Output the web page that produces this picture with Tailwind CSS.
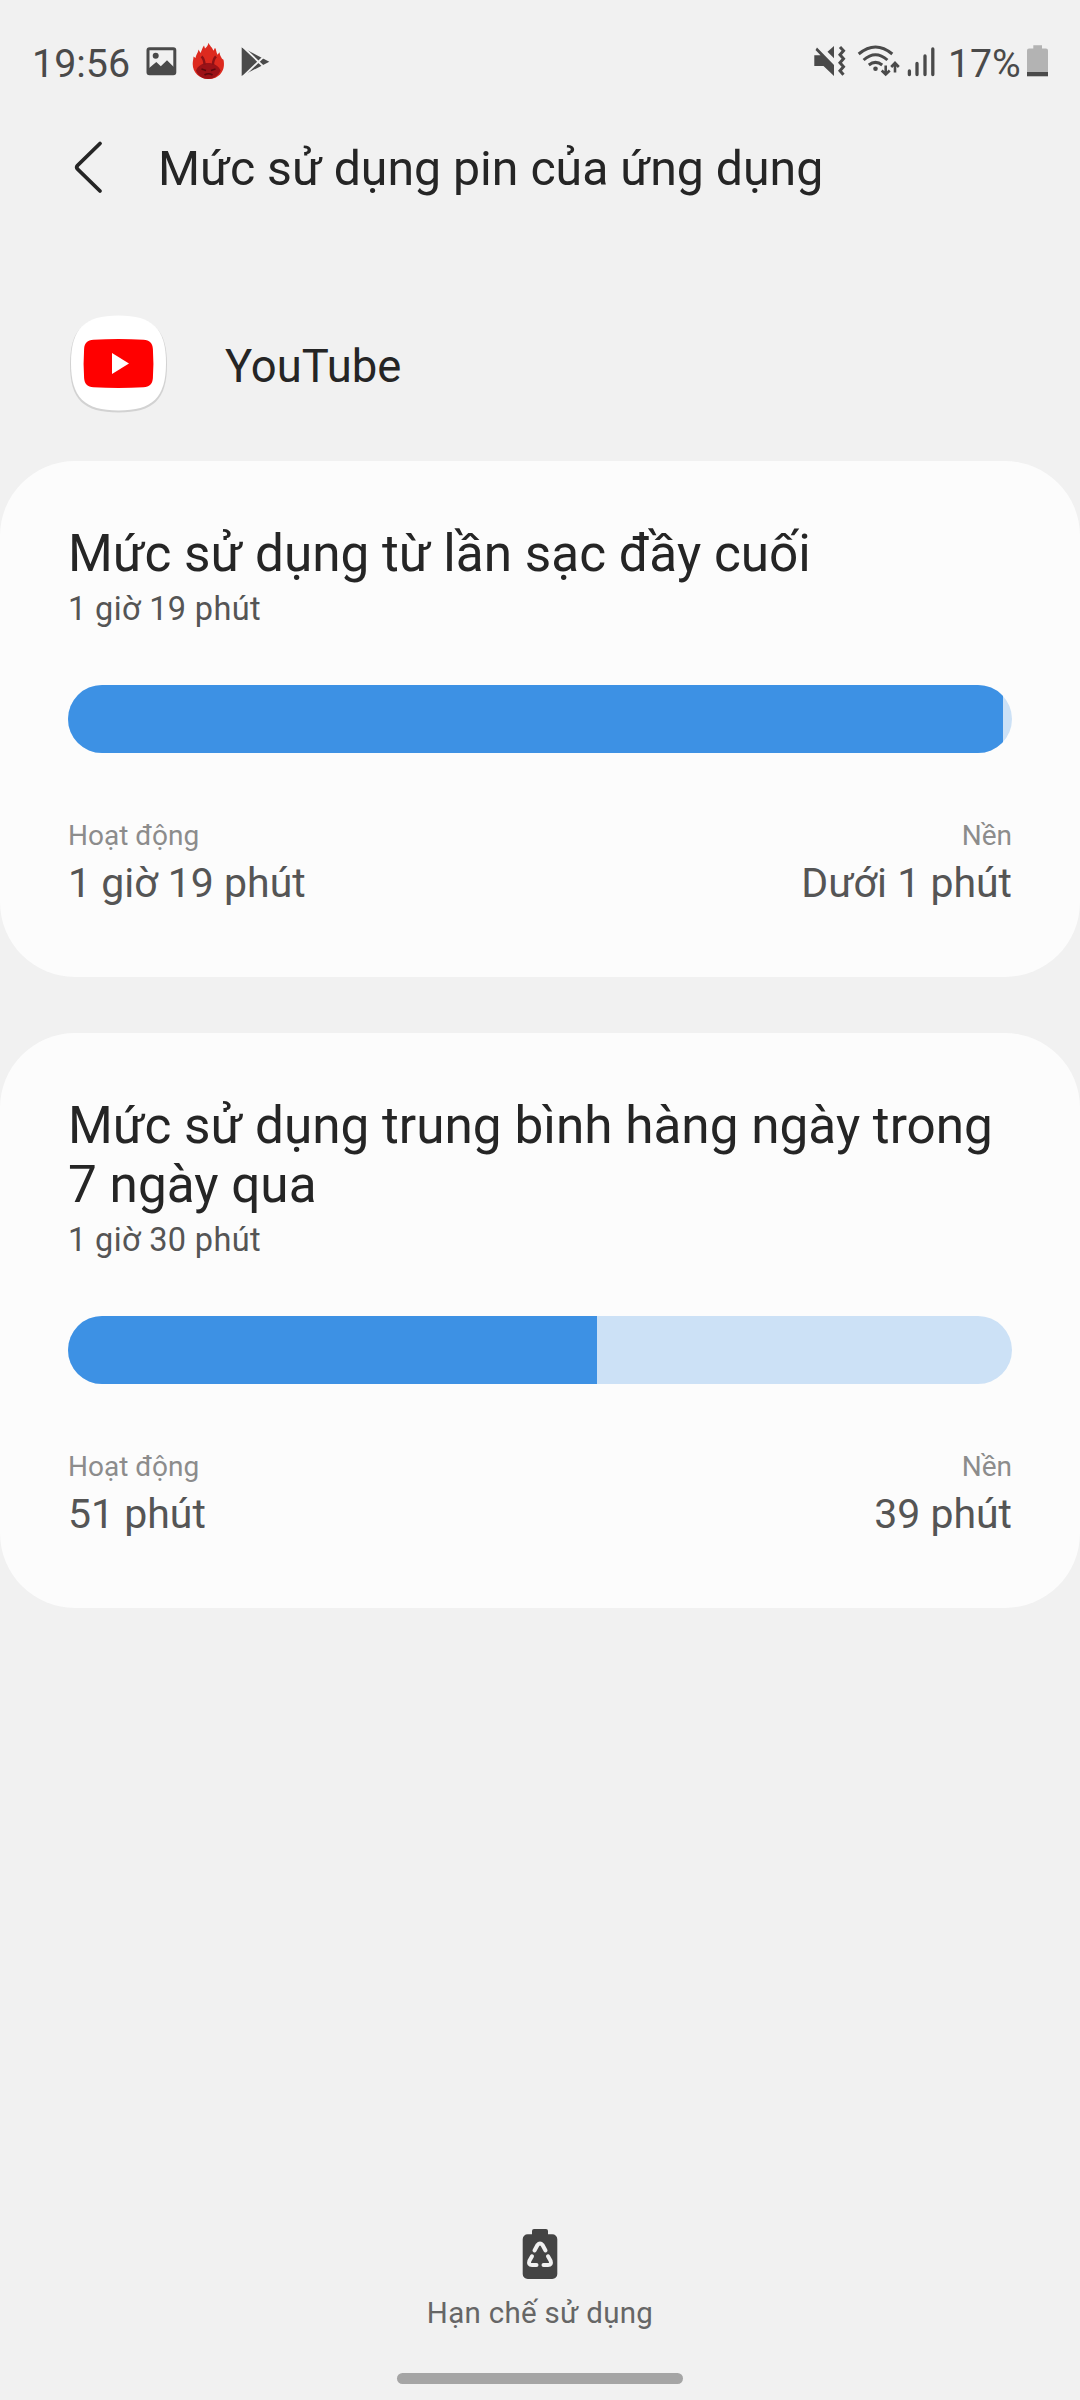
<!DOCTYPE html>
<html lang="vi">
<head>
<meta charset="utf-8">
<title>Mức sử dụng pin của ứng dụng</title>
<script src="https://cdn.jsdelivr.net/npm/@tailwindcss/browser@4"></script>
</head>
<body class="bg-[#f1f1f1]">
<div class="flex h-[2400px] w-[1080px] flex-col overflow-hidden font-[Roboto,sans-serif] text-[#252525]">

  <!-- Status bar -->
  <div class="flex h-[126px] shrink-0 items-center text-[#4a4a4a]">
    <span class="w-[146px] pt-[2px] pl-[32px] text-[39.4px] whitespace-nowrap">19:56</span>
    <svg class="h-[60px] w-[134px]" viewBox="146 33 134 60" fill="none">
      <rect x="148" y="48.8" width="26.8" height="25" rx="1.5" stroke="#4a4a4a" stroke-width="3"/>
      <circle cx="155.7" cy="55.7" r="3" fill="#4a4a4a"/>
      <path d="M148 69l8.300-7 4.500 4.200 6.200-6 7.800 7.800v6h-26.800z" fill="#4a4a4a"/>
      <path d="M208.500 42.700c1 3 3.500 4 5 8l1.500-3c1.500 2 1 4 2.500 7l2-2.500c.5 3 1 4 2.500 6.500l1.500 1c1 5 .5 10-2.500 13.500-3 4-7.500 5.800-12.500 5.800-9 0-15.800-6.500-15.800-15 0-3 .8-4.500.8-7.500l2 1.500c.8-4 2.500-5 3-8.500l2 3.500c1.500-3.500 2-5.500 3.500-7.500l1 3c2-2 3-3 3.500-5.800z" fill="#dd2a1f"/>
      <path d="M196 70.500c2-5 6.500-7.500 12-7.500s10.500 2.500 12.500 7.500c-2.300 5.500-7 8.500-12.500 8.500s-10-3-12-8.500z" fill="#9c1217"/>
      <path d="M204.500 65c0-4-.8-6.500-3-8.500M213 65c0-4 .8-6.500 3-8.500" stroke="#8c1216" stroke-width="2.400"/>
      <path d="M201.500 69l4.500 1.500M215.500 69l-4.500 1.500M204.500 75q4-2.500 8 0" stroke="#5c0a0e" stroke-width="1.600"/>
      <path d="M241.700 47.300L269.300 61.700 241.700 76z" fill="#4a4a4a"/>
      <path d="M241.500 45.500L264.500 67.500M242.500 77L265 55.500" stroke="#f1f1f1" stroke-width="1.800"/>
    </svg>
    <svg class="ml-[530px] h-[60px] w-[138px]" viewBox="810 33 138 60" fill="none">
      <path d="M817 47.500l17 17.500V76l-10.500-10h-9.200V55.300h6.200l-5-5.300z" fill="#4a4a4a"/>
      <path d="M827.500 51.700L834 46v12.200z" fill="#4a4a4a"/>
      <path d="M840 47l3.500 3.700-3.500 4 3.500 4-3.500 4 3.500 4-3.500 4 3.500 4" stroke="#4a4a4a" stroke-width="3"/>
      <g stroke="#4a4a4a" stroke-width="3">
        <path d="M858.700 54q16.800-14 33.600 0M863.600 60q11.900-10.500 23.800 0M868.800 65q6.700-5.200 13.400 0"/>
        <path d="M885.700 65.500v8.500M881.700 70.500l4 4 4-4M895 63.500v9M891.200 67l3.800-4 3.800 4" stroke-width="2.600"/>
      </g>
      <circle cx="875.500" cy="68.800" r="2.300" fill="#4a4a4a"/>
      <path d="M909.400 71v3.500M917 63.500v11M925 56v18.500M932.800 49v25.500" stroke="#4a4a4a" stroke-width="3.300" stroke-linecap="round"/>
    </svg>
    <span class="w-[78px] pt-[2px] text-[39.2px] whitespace-nowrap">17%</span>
    <svg class="h-[60px] w-[24px]" viewBox="1026 33 24 60">
      <path d="M1033.300 45.300h8.700v3.200h4a2 2 0 012 2v21.500h-21v-21.500a2 2 0 012-2h4.300z" fill="#b3b3b3"/>
      <path d="M1027 72h21v4.300h-21z" fill="#4a4a4a"/>
    </svg>
  </div>

  <!-- App bar -->
  <header class="flex h-[84px] shrink-0 items-center">
    <svg class="ml-[68px] h-[60px] w-[90px]" viewBox="68 138 90 60" fill="none">
      <path d="M100 143.500L77.500 165.500Q76 167.200 77.500 169L100 191" stroke="#252525" stroke-width="3.800" stroke-linecap="round"/>
    </svg>
    <h1 class="pt-[2px] text-[48.2px] whitespace-nowrap">Mức sử dụng pin của ứng dụng</h1>
  </header>

  <!-- App identity -->
  <div class="mt-[61px] flex h-[190px] shrink-0 items-center pl-[66px]">
    <svg class="h-[106px] w-[106px] -translate-y-[3px]" viewBox="66 310 106 106">
      <path d="M118.500 316.500c35 0 48.500 13 48.500 48s-13.500 48-48.500 48-48.500-13-48.500-48 13.500-48 48.500-48z" fill="#d2d2d2"/>
      <path d="M118.500 315.500c34 0 47.500 13 47.500 47.500s-13.500 47.500-47.500 47.500S71 397.500 71 363s13.500-47.500 47.500-47.500z" fill="#fff"/>
      <path d="M93.500 339.800q25-1.600 50 0c6 .4 9 3.200 9.400 9.200q1 14.500 0 29c-.4 6-3.400 8.800-9.400 9.200q-25 1.600-50 0c-6-.4-9-3.200-9.400-9.200q-1-14.500 0-29c.4-6 3.400-8.800 9.400-9.200z" fill="#f00"/>
      <path d="M112 353l17 10.500L112 374z" fill="#fff"/>
    </svg>
    <span class="ml-[53px] pt-[2px] text-[45.4px] whitespace-nowrap">YouTube</span>
  </div>

  <!-- Since last full charge -->
  <section class="shrink-0 rounded-[75px] bg-[#fcfcfc] px-[68px] pt-[63px] pb-[70px]">
    <h2 class="text-[51.3px] leading-[59px] whitespace-nowrap">Mức sử dụng từ lần sạc đầy cuối</h2>
    <p class="mt-[7px] text-[32.5px] leading-[38px] tracking-[0.35px] text-[#555]">1 giờ 19 phút</p>
    <div class="mt-[57px] h-[68px] overflow-hidden rounded-full bg-[#cce1f6]">
      <div class="h-full bg-[#3d91e4]" style="width:99.05%"></div>
    </div>
    <div class="mt-[67px] flex justify-between">
      <div>
        <p class="text-[28px] leading-[32px] text-[#8c8c8c]">Hoạt động</p>
        <p class="mt-[7px] text-[41px] leading-[48px] text-[#555]">1 giờ 19 phút</p>
      </div>
      <div class="text-right">
        <p class="text-[28px] leading-[32px] text-[#8c8c8c]">Nền</p>
        <p class="mt-[7px] text-[41px] leading-[48px] text-[#555]">Dưới 1 phút</p>
      </div>
    </div>
  </section>

  <!-- Daily average -->
  <section class="mt-[56px] shrink-0 rounded-[75px] bg-[#fcfcfc] px-[68px] pt-[63px] pb-[70px]">
    <h2 class="text-[51.3px] leading-[59px] whitespace-nowrap">Mức sử dụng trung bình hàng ngày trong<br>7 ngày qua</h2>
    <p class="mt-[7px] text-[32.5px] leading-[38px] tracking-[0.35px] text-[#555]">1 giờ 30 phút</p>
    <div class="mt-[57px] h-[68px] overflow-hidden rounded-full bg-[#cce1f6]">
      <div class="h-full bg-[#3d91e4]" style="width:56%"></div>
    </div>
    <div class="mt-[67px] flex justify-between">
      <div>
        <p class="text-[28px] leading-[32px] text-[#8c8c8c]">Hoạt động</p>
        <p class="mt-[7px] text-[41px] leading-[48px] text-[#555]">51 phút</p>
      </div>
      <div class="text-right">
        <p class="text-[28px] leading-[32px] text-[#8c8c8c]">Nền</p>
        <p class="mt-[7px] text-[41px] leading-[48px] text-[#555]">39 phút</p>
      </div>
    </div>
  </section>

  <!-- Bottom action -->
  <footer class="mt-auto flex h-[174px] shrink-0 flex-col items-center">
    <svg class="h-[56px] w-[40px]" viewBox="520 2226 40 56" fill="none">
      <path d="M534 2229h12a2 2 0 012 2v3.300h4.300a5 5 0 015 5V2274a5 5 0 01-5 5h-24.600a5 5 0 01-5-5v-34.700a5 5 0 015-5h4.300V2231a2 2 0 012-2z" fill="#444"/>
      <path d="M534.500 2250.500l3-5.500q2.500-3 5 0l3 5.500M532 2256.300l-2.600 4.500q-1.400 4.200 2.600 4.200h4.500M548 2256.300l2.600 4.500q1.400 4.200-2.600 4.200h-4.500" stroke="#f1f1f1" stroke-width="4" stroke-linecap="round"/>
    </svg>
    <span class="mt-[14px] text-[29.5px] leading-[34px] tracking-[0.3px] whitespace-nowrap text-[#666]">Hạn chế sử dụng</span>
    <div class="mt-[43px] h-[11px] w-[286px] rounded-full bg-[#a5a5a5]"></div>
  </footer>
</div>
</body>
</html>
